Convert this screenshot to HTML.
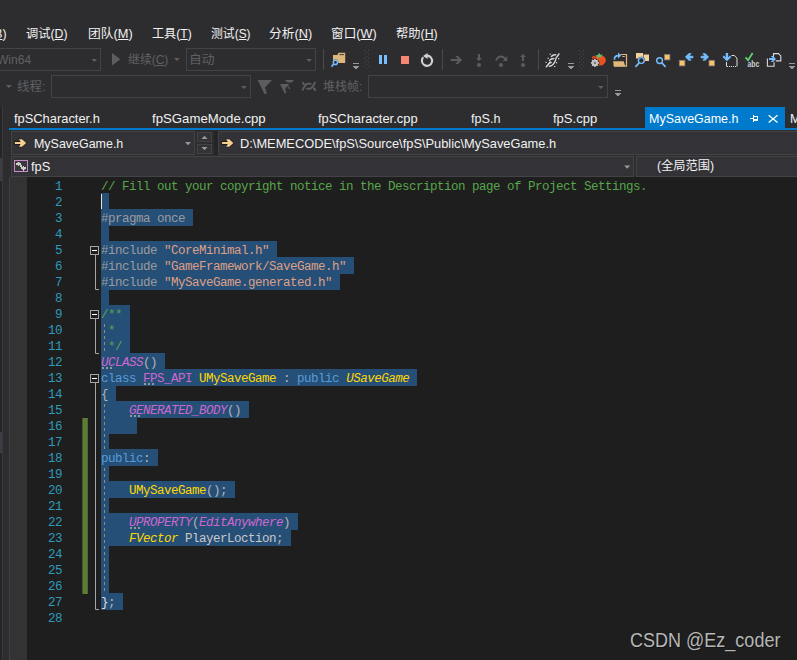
<!DOCTYPE html>
<html lang="zh-CN">
<head>
<meta charset="utf-8">
<title>MySaveGame.h</title>
<style>
*{margin:0;padding:0;box-sizing:border-box}
html,body{width:797px;height:660px;overflow:hidden;background:#2d2d30}
body{position:relative;font-family:"Liberation Sans","Noto Sans CJK SC",sans-serif;font-size:13px;color:#f1f1f1}
.a{position:absolute}
.cb{position:absolute;border:1px solid #434346;background:#333337}
.dz{background:#2d2d30;border-color:#434346}
.tx{position:absolute;white-space:nowrap;line-height:20px;height:20px;transform-origin:0 0}
.tx u{text-decoration:underline;text-underline-offset:1px;text-decoration-thickness:1px}
#ed{position:absolute;left:27px;top:177px;width:770px;height:483px;background:#1e1e1e}
#mg{position:absolute;left:10px;top:177px;width:17px;height:483px;background:#333333}
.sel{position:absolute;left:101px;height:17px;background:#264f78}
.ln{position:absolute;left:27px;width:35px;height:16px;line-height:16px;text-align:right;color:#2e9abb;font-family:"Liberation Mono",monospace;font-size:12.5px;letter-spacing:-0.5012px;white-space:pre}
.cl{position:absolute;left:101px;height:16px;line-height:16px;font-family:"Liberation Mono",monospace;font-size:12.5px;letter-spacing:-0.5012px;white-space:pre}
.cl .i{font-style:italic}
#ov{position:absolute;left:0;top:0;width:797px;height:660px;pointer-events:none}
</style>
</head>
<body>
<!-- left auto-hide strip -->
<div class="a" style="left:0;top:107px;width:2px;height:553px;background:#252526"></div>
<div class="a" style="left:2px;top:107px;width:1px;height:553px;background:#3a3a3e"></div>
<div class="a" style="left:0;top:158px;width:2px;height:23px;background:#3e3e42"></div>
<div class="a" style="left:0;top:432px;width:2px;height:21px;background:#3e3e42"></div>

<!-- toolbar combos -->
<div class="cb dz" style="left:-40px;top:48px;width:141px;height:23px"></div>
<div class="tx" style="left:-3px;top:50px;font-size:12.3px;color:#606063;transform:scaleX(0.98)">Win64</div>
<div class="tx" style="left:-34.500px;top:24px;font-size:12.3px;transform:scaleX(1)">生成(<u>B</u>)</div>
<div class="cb dz" style="left:186px;top:48px;width:130px;height:23px"></div>
<div class="cb dz" style="left:51px;top:75px;width:200px;height:23px"></div>
<div class="cb dz" style="left:368px;top:75px;width:240px;height:23px"></div>

<!-- tabs -->
<div class="a" style="left:645px;top:107px;width:140px;height:22px;background:#007acc"></div>
<div class="a" style="left:9px;top:128px;width:788px;height:2px;background:#007acc"></div>
<div class="tx" style="left:790px;top:109px;font-size:13px;transform:scaleX(0.97)">MySaveGame.cpp</div>

<!-- nav bars -->
<div class="a" style="left:9px;top:130px;width:788px;height:47px;background:#2d2d30"></div>
<div class="cb" style="left:11px;top:131px;width:184px;height:24px"></div>
<div class="cb" style="left:197px;top:132px;width:15px;height:10px"></div>
<div class="cb" style="left:197px;top:144px;width:15px;height:10px"></div>
<div class="a" style="left:214px;top:131px;width:4px;height:24px;background:#252526"></div>
<div class="cb" style="left:218px;top:131px;width:590px;height:24px"></div>
<div class="cb" style="left:11px;top:156px;width:623px;height:21px"></div>
<div class="cb" style="left:636px;top:156px;width:170px;height:21px"></div>

<!-- editor -->
<div class="a" style="left:9px;top:177px;width:1px;height:483px;background:#3f3f46"></div>
<div id="mg"></div>
<div id="ed"></div>

<div class="sel" style="top:193px;width:8px"></div>
<div class="sel" style="top:209px;width:92px"></div>
<div class="sel" style="top:225px;width:8px"></div>
<div class="sel" style="top:241px;width:176px"></div>
<div class="sel" style="top:257px;width:253px"></div>
<div class="sel" style="top:273px;width:239px"></div>
<div class="sel" style="top:289px;width:8px"></div>
<div class="sel" style="top:305px;width:29px"></div>
<div class="sel" style="top:321px;width:29px"></div>
<div class="sel" style="top:337px;width:29px"></div>
<div class="sel" style="top:353px;width:64px"></div>
<div class="sel" style="top:369px;width:316px"></div>
<div class="sel" style="top:385px;width:15px"></div>
<div class="sel" style="top:401px;width:148px"></div>
<div class="sel" style="top:417px;width:36px"></div>
<div class="sel" style="top:433px;width:8px"></div>
<div class="sel" style="top:449px;width:57px"></div>
<div class="sel" style="top:465px;width:8px"></div>
<div class="sel" style="top:481px;width:134px"></div>
<div class="sel" style="top:497px;width:8px"></div>
<div class="sel" style="top:513px;width:197px"></div>
<div class="sel" style="top:529px;width:190px"></div>
<div class="sel" style="top:545px;width:8px"></div>
<div class="sel" style="top:561px;width:8px"></div>
<div class="sel" style="top:577px;width:8px"></div>
<div class="sel" style="top:593px;width:22px"></div>
<div class="ln" style="top:179px">1</div>
<div class="cl" style="top:179px"><span style="color:#57a64a">// Fill out your copyright notice in the Description page of Project Settings.</span></div>
<div class="ln" style="top:195px">2</div>
<div class="ln" style="top:211px">3</div>
<div class="cl" style="top:211px"><span style="color:#9b9b9b">#pragma once</span></div>
<div class="ln" style="top:227px">4</div>
<div class="ln" style="top:243px">5</div>
<div class="cl" style="top:243px"><span style="color:#9b9b9b">#include </span><span style="color:#de9f84">"CoreMinimal.h"</span></div>
<div class="ln" style="top:259px">6</div>
<div class="cl" style="top:259px"><span style="color:#9b9b9b">#include </span><span style="color:#de9f84">"GameFramework/SaveGame.h"</span></div>
<div class="ln" style="top:275px">7</div>
<div class="cl" style="top:275px"><span style="color:#9b9b9b">#include </span><span style="color:#de9f84">"MySaveGame.generated.h"</span></div>
<div class="ln" style="top:291px">8</div>
<div class="ln" style="top:307px">9</div>
<div class="cl" style="top:307px"><span style="color:#57a64a">/**</span></div>
<div class="ln" style="top:323px">10</div>
<div class="cl" style="top:323px"><span style="color:#57a64a"> * </span></div>
<div class="ln" style="top:339px">11</div>
<div class="cl" style="top:339px"><span style="color:#57a64a"> */</span></div>
<div class="ln" style="top:355px">12</div>
<div class="cl" style="top:355px"><span style="color:#cc68cf" class="i">UCLASS</span><span style="color:#b4b4b4">()</span></div>
<div class="ln" style="top:371px">13</div>
<div class="cl" style="top:371px"><span style="color:#569cd6">class</span><span style="color:#c8c8c8"> </span><span style="color:#cc68cf">FPS_API</span><span style="color:#c8c8c8"> </span><span style="color:#ffd700">UMySaveGame</span><span style="color:#b4b4b4"> : </span><span style="color:#569cd6">public</span><span style="color:#c8c8c8"> </span><span style="color:#ffd700" class="i">USaveGame</span></div>
<div class="ln" style="top:387px">14</div>
<div class="cl" style="top:387px"><span style="color:#b4b4b4">{</span></div>
<div class="ln" style="top:403px">15</div>
<div class="cl" style="top:403px"><span style="color:#c8c8c8">    </span><span style="color:#cc68cf" class="i">GENERATED_BODY</span><span style="color:#b4b4b4">()</span></div>
<div class="ln" style="top:419px">16</div>
<div class="ln" style="top:435px">17</div>
<div class="ln" style="top:451px">18</div>
<div class="cl" style="top:451px"><span style="color:#569cd6">public</span><span style="color:#b4b4b4">:</span></div>
<div class="ln" style="top:467px">19</div>
<div class="ln" style="top:483px">20</div>
<div class="cl" style="top:483px"><span style="color:#c8c8c8">    </span><span style="color:#ffd700">UMySaveGame</span><span style="color:#b4b4b4">();</span></div>
<div class="ln" style="top:499px">21</div>
<div class="ln" style="top:515px">22</div>
<div class="cl" style="top:515px"><span style="color:#c8c8c8">    </span><span style="color:#cc68cf" class="i">UPROPERTY</span><span style="color:#b4b4b4">(</span><span style="color:#cc68cf" class="i">EditAnywhere</span><span style="color:#b4b4b4">)</span></div>
<div class="ln" style="top:531px">23</div>
<div class="cl" style="top:531px"><span style="color:#c8c8c8">    </span><span style="color:#ffd700" class="i">FVector</span><span style="color:#c8c8c8"> </span><span style="color:#c8c8c8">PlayerLoction</span><span style="color:#b4b4b4">;</span></div>
<div class="ln" style="top:547px">24</div>
<div class="ln" style="top:563px">25</div>
<div class="ln" style="top:579px">26</div>
<div class="ln" style="top:595px">27</div>
<div class="cl" style="top:595px"><span style="color:#dcdcdc">}</span><span style="color:#b4b4b4">;</span></div>
<div class="ln" style="top:611px">28</div>
<div class="a" style="left:101px;top:194px;width:1px;height:15px;background:#e4e4e4"></div>

<div class="tx" style="left:26.4px;top:24px;font-size:12.3px;color:#f1f1f1;transform:scaleX(0.9959)">调试(<u>D</u>)</div>
<div class="tx" style="left:87.6px;top:24px;font-size:12.3px;color:#f1f1f1;transform:scaleX(1.0395)">团队(<u>M</u>)</div>
<div class="tx" style="left:151.5px;top:24px;font-size:12.3px;color:#f1f1f1;transform:scaleX(0.9855)">工具(<u>T</u>)</div>
<div class="tx" style="left:210.6px;top:24px;font-size:12.3px;color:#f1f1f1;transform:scaleX(0.9633)">测试(<u>S</u>)</div>
<div class="tx" style="left:268.9px;top:24px;font-size:12.3px;color:#f1f1f1;transform:scaleX(1.0351)">分析(<u>N</u>)</div>
<div class="tx" style="left:331.0px;top:24px;font-size:12.3px;color:#f1f1f1;transform:scaleX(1.0283)">窗口(<u>W</u>)</div>
<div class="tx" style="left:395.5px;top:24px;font-size:12.3px;color:#f1f1f1;transform:scaleX(0.9993)">帮助(<u>H</u>)</div>
<div class="tx" style="left:127.8px;top:50px;font-size:12.3px;color:#606063;transform:scaleX(0.9671)">继续(<u>C</u>)</div>
<div class="tx" style="left:188.8px;top:50px;font-size:12.3px;color:#606063;transform:scaleX(1.0409)">自动</div>
<div class="tx" style="left:17.2px;top:77px;font-size:12.3px;color:#606063;transform:scaleX(1.0116)">线程:</div>
<div class="tx" style="left:322.8px;top:77px;font-size:12.3px;color:#606063;transform:scaleX(0.9752)">堆栈帧:</div>
<div class="tx" style="left:13.7px;top:109px;font-size:13px;color:#f1f1f1;transform:scaleX(0.9901)">fpSCharacter.h</div>
<div class="tx" style="left:151.8px;top:109px;font-size:13px;color:#f1f1f1;transform:scaleX(1.015)">fpSGameMode.cpp</div>
<div class="tx" style="left:318.1px;top:109px;font-size:13px;color:#f1f1f1;transform:scaleX(0.991)">fpSCharacter.cpp</div>
<div class="tx" style="left:471.1px;top:109px;font-size:13px;color:#f1f1f1;transform:scaleX(0.9701)">fpS.h</div>
<div class="tx" style="left:552.8px;top:109px;font-size:13px;color:#f1f1f1;transform:scaleX(1.0017)">fpS.cpp</div>
<div class="tx" style="left:648.8px;top:109px;font-size:13px;color:#ffffff;transform:scaleX(0.9599)">MySaveGame.h</div>
<div class="tx" style="left:33.8px;top:134px;font-size:13px;color:#f1f1f1;transform:scaleX(0.9577)">MySaveGame.h</div>
<div class="tx" style="left:240.4px;top:134px;font-size:13px;color:#f1f1f1;transform:scaleX(0.9877)">D:\MEMECODE\fpS\Source\fpS\Public\MySaveGame.h</div>
<div class="tx" style="left:31.1px;top:157px;font-size:13px;color:#f1f1f1;transform:scaleX(0.984)">fpS</div>
<div class="tx" style="left:656.7px;top:156px;font-size:12.3px;color:#f1f1f1;transform:scaleX(0.9948)">(全局范围)</div>
<div class="tx" style="left:630.1px;top:630px;font-size:20.3px;color:#b6b6b6;transform:scaleX(0.8881);text-shadow:1px 1px 0 rgba(0,0,0,.35)">CSDN @Ez_coder</div>
<svg id="ov" width="797" height="660" viewBox="0 0 797 660">
<!-- dropdown triangles (disabled) -->
<g fill="#5e5e61">
<path d="M91.5 59h5.6l-2.8 3z"/>
<path d="M174 58h5.8l-2.9 3z"/>
<path d="M306.3 59h5.6l-2.8 3z"/>
<path d="M6 85h5.8l-2.9 3z"/>
<path d="M241 86h5.8l-2.9 3z"/>
<path d="M598 86h5.8l-2.9 3z"/>
<!-- play -->
<path d="M112 53l8.3 6.2-8.3 6.2z"/>
</g>
<!-- separators -->
<g fill="#4a4a4d">
<rect x="323" y="49" width="1" height="21"/>
<rect x="442" y="49" width="1" height="21"/>
<rect x="538" y="49" width="1" height="21"/>
</g>
<!-- grips -->
<g fill="#47474b">
<g><rect x="364" y="50" width="1" height="1"/><rect x="368" y="50" width="1" height="1"/><rect x="366" y="52" width="1" height="1"/>
<rect x="364" y="54" width="1" height="1"/><rect x="368" y="54" width="1" height="1"/><rect x="366" y="56" width="1" height="1"/>
<rect x="364" y="58" width="1" height="1"/><rect x="368" y="58" width="1" height="1"/><rect x="366" y="60" width="1" height="1"/>
<rect x="364" y="62" width="1" height="1"/><rect x="368" y="62" width="1" height="1"/><rect x="366" y="64" width="1" height="1"/>
<rect x="364" y="66" width="1" height="1"/><rect x="368" y="66" width="1" height="1"/><rect x="366" y="68" width="1" height="1"/></g>
<g transform="translate(215 0)"><rect x="364" y="50" width="1" height="1"/><rect x="368" y="50" width="1" height="1"/><rect x="366" y="52" width="1" height="1"/>
<rect x="364" y="54" width="1" height="1"/><rect x="368" y="54" width="1" height="1"/><rect x="366" y="56" width="1" height="1"/>
<rect x="364" y="58" width="1" height="1"/><rect x="368" y="58" width="1" height="1"/><rect x="366" y="60" width="1" height="1"/>
<rect x="364" y="62" width="1" height="1"/><rect x="368" y="62" width="1" height="1"/><rect x="366" y="64" width="1" height="1"/>
<rect x="364" y="66" width="1" height="1"/><rect x="368" y="66" width="1" height="1"/><rect x="366" y="68" width="1" height="1"/></g>
</g>
<!-- overflow glyphs -->
<g fill="#999999" shape-rendering="crispEdges">
<path d="M353 63h6v1h-6zM353 66h6v1h-6zM354 67h4v1h-4zM355 68h2v1h-2z"/>
<path d="M568 63h6v1h-6zM568 66h6v1h-6zM569 67h4v1h-4zM570 68h2v1h-2z"/>
<path d="M789 63h6v1h-6zM789 66h6v1h-6zM790 67h4v1h-4zM791 68h2v1h-2z"/>
<path d="M615 90h6v1h-6zM615 93h6v1h-6zM616 94h4v1h-4zM617 95h2v1h-2z"/>
</g>
<!-- folder + magnifier -->
<path d="M333 55h4.3l1.2-2.2h6.7v10.1H333z" fill="#dcb67a"/>
<rect x="339.5" y="54.2" width="4.6" height="0.9" fill="#2d2d30"/>
<circle cx="335.4" cy="62.4" r="2.9" fill="#2d2d30"/>
<circle cx="335.4" cy="62.4" r="2.1" fill="#2d2d30" stroke="#75beff" stroke-width="1.4"/>
<path d="M333.8 64l-2.4 2.6" stroke="#75beff" stroke-width="1.6" fill="none"/>
<!-- pause / stop / restart -->
<rect x="379" y="55" width="3" height="9" fill="#75beff"/>
<rect x="384" y="55" width="3" height="9" fill="#75beff"/>
<rect x="401" y="56" width="8" height="8" fill="#f48771"/>
<path d="M423.2 57.3A5.1 5.1 0 1 0 427 55.6" fill="none" stroke="#d0d0d0" stroke-width="2.1"/>
<path d="M427.6 53l-4.6 3 4.6 3z" fill="#d0d0d0"/>
<!-- step arrows (disabled) -->
<g fill="#5c5c5f" stroke="none">
<path d="M450.7 59h7.3l-2.6-3h2.6l4 4-4 4h-2.6l2.6-3h-7.3z"/>
<path d="M478 54h2v4h2l-3 3-3-3h2z"/><circle cx="479" cy="65" r="2"/>
<path d="M495.2 60.8c0.8-3.4 3-5.4 5.8-5.4 2 0 3.6 1 4.7 2.5l1.6-1.6v4.6h-4.6l1.6-1.6c-0.8-1.1-1.9-1.9-3.3-1.9-1.900 0-3.300 1.300-3.900 3.400z"/><circle cx="501" cy="65" r="2"/>
<path d="M522 61v-4h-2l3-3 3 3h-2v4z"/><circle cx="523" cy="65" r="2"/>
</g>
<!-- hash-like icon -->
<g stroke="#d4d4d4" stroke-width="1.500" fill="none" stroke-linecap="round">
<path d="M546.300 66.700l4-4.600M557.200 56.600l1.700-2.600"/>
<path d="M551.400 56.500q1.300-2 4.300-1.800M549.500 60.400q1.400-1.900 4.300-1.900M549.200 63.300q0.800-0.800 2-0.800" stroke-width="1.400"/>
<path d="M556.300 57.300c-0.800 3.600-2.200 8.600-7 9" stroke-width="1.400"/>
</g>
<g fill="#d4d4d4"><rect x="549.600" y="53.600" width="1.200" height="1.200"/><rect x="547.500" y="57.700" width="1.200" height="1.200"/><rect x="545.500" y="61.800" width="1.200" height="1.200"/><rect x="558.100" y="58" width="1.200" height="1.200"/><rect x="556" y="62.100" width="1.200" height="1.200"/><rect x="554.100" y="65.900" width="1.200" height="1.200"/></g>
<!-- tomato -->
<ellipse cx="600" cy="60.200" rx="5.800" ry="5.300" fill="#e9511f"/>
<circle cx="594" cy="57.800" r="2" fill="#d8451a"/>
<path d="M595 55.800l2.800-0.800 1.400-2.300 1 2 2.800-0.300-2 1.800 0.600 1.600-2.600-0.700-2 1.300 0.200-1.900z" fill="#5cc06a"/>
<circle cx="594.900" cy="62.900" r="4.500" fill="#2d2d30"/>
<circle cx="594.900" cy="62.900" r="2.500" fill="#c4c4c4" stroke="#c4c4c4" stroke-width="1.200"/>
<g stroke="#c4c4c4" stroke-width="1.600"><path d="M594.900 58.900v8M590.900 62.900h8M592.100 60.100l5.600 5.600M592.100 65.700l5.600-5.600"/></g>
<circle cx="594.900" cy="62.900" r="1.100" fill="#6a6a6a"/>
<!-- folder with blue arrow -->
<path d="M620.500 54.500h6v11.700h-12.600" fill="none" stroke="#dcb67a" stroke-width="1.200"/>
<rect x="622.300" y="56" width="2.500" height="1" fill="#dcb67a"/>
<path d="M613.200 61.300h10.500l1.500 5h-11.500z" fill="#dcb67a"/>
<path d="M614.600 59.600c-0.600-2.600 1-4 4-4" fill="none" stroke="#75beff" stroke-width="1.700"/>
<path d="M618 52.600l3.200 3-3.200 3z" fill="#75beff"/>
<!-- find in files -->
<rect x="636" y="53" width="7" height="5.500" fill="#f0d29a"/>
<rect x="643.500" y="54.500" width="5.500" height="6.500" fill="#f0d29a"/>
<circle cx="641.300" cy="60.500" r="3.800" fill="#2d2d30"/>
<circle cx="641.300" cy="60.500" r="2.900" fill="#2d2d30" stroke="#75beff" stroke-width="1.400"/>
<path d="M639.200 62.800l-3.800 4" stroke="#75beff" stroke-width="1.700" fill="none"/>
<!-- find next -->
<circle cx="659.600" cy="60.600" r="2.900" fill="none" stroke="#75beff" stroke-width="1.400"/>
<path d="M661.800 62.800l3.800 4" stroke="#75beff" stroke-width="1.700" fill="none"/>
<rect x="664.500" y="54.500" width="5.400" height="5.400" fill="#fcc26a" stroke="#7a7a7a" stroke-width="0.800"/>
<!-- nav back / forward -->
<rect x="679.300" y="60.300" width="5.600" height="5.600" fill="#fcc26a" stroke="#7a7a7a" stroke-width="0.800"/>
<path d="M693 56.200v1.800h-3.800l2 2.300h-2.500l-3.400-3.300 3.400-3.400h2.500l-2 2.400 3.800 0.200z" fill="#75beff" stroke="#75beff" stroke-width="0.600"/>
<path d="M701 56.200v1.800h3.800l-2 2.300h2.500l3.400-3.300-3.400-3.400h-2.500l2 2.400-3.800 0.200z" fill="#75beff" stroke="#75beff" stroke-width="0.600"/>
<rect x="709" y="60.300" width="5.600" height="5.600" fill="#fcc26a" stroke="#7a7a7a" stroke-width="0.800"/>
<!-- down arrow + page -->
<rect x="725.700" y="53" width="2.400" height="6" fill="#75beff"/>
<path d="M723.200 56.200l3.700 3.700 3.700-3.700" fill="none" stroke="#75beff" stroke-width="2"/>
<path d="M731.500 55.500h2.800l2.700 2.700v8.300" fill="none" stroke="#e0e0e0" stroke-width="1"/>
<path d="M726.500 62v4.500" fill="none" stroke="#e0e0e0" stroke-width="1"/>
<path d="M727 66.500h10" fill="none" stroke="#e0e0e0" stroke-width="1" stroke-dasharray="1 1"/>
<!-- check abc -->
<path d="M745.500 57.300l2.600 3 4.500-7.200" fill="none" stroke="#5fd068" stroke-width="1.800"/>
<text x="747.400" y="66.700" font-family="Liberation Sans, sans-serif" font-size="8.500" font-weight="bold" fill="#d0d0d0" textLength="11.800" lengthAdjust="spacingAndGlyphs">abc</text>
<!-- copy docs -->
<path d="M773.500 58v-4.400h5l2.300 2.300v5h-5" fill="none" stroke="#d8d8d8" stroke-width="1.100"/>
<path d="M767.400 58.600v7.600h6.700v-4" fill="none" stroke="#d8d8d8" stroke-width="1.100"/>
<path d="M769 58h3.600l-1.800-2h2.200l3 3-3 3h-2.200l1.800-2h-3.600z" fill="#75beff"/>
<!-- row2 filter icons (disabled) -->
<g fill="#5c5c5f">
<path d="M257.700 80h14.300l-7 7.600 2 6.200h-2.700z"/>
<path d="M285 80h9l-2.200 2.600h-4.400zM280 84h9.500l-4.500 5 1.600 4.200h-2z"/>
<path d="M288.500 86l2 3.200h-1.200l-1.600-2.400z"/>
</g>
<g fill="none" stroke="#5c5c5f" stroke-width="2" stroke-linecap="round">
<path d="M302.700 89.600c1.500-2 2.500-5.900 5.200-5.900h2.600"/>
<path d="M315 82.700c-1.500 2-2.500 6-5.200 6h-2.600"/>
<path d="M303 82.900l1 1.400M314 88.400l1.300 1.800"/>
</g>
<!-- active tab pin + close -->
<g fill="#ffffff" shape-rendering="crispEdges">
<rect x="750" y="118" width="4" height="1"/><rect x="753" y="115" width="1" height="7"/>
<rect x="754" y="116" width="4" height="1"/><rect x="757" y="116" width="1" height="5"/><rect x="754" y="119" width="4" height="2"/>
</g>
<path d="M768.700 115.300l8.800 7.300M777.500 115.300l-8.800 7.300" fill="none" stroke="#ffffff" stroke-width="1.300"/>
<!-- nav dropdown arrows -->
<g fill="#999999">
<path d="M185 142h6l-3 3.300z"/>
<path d="M624.200 165.500h6l-3 3.300z"/>
<path d="M201.500 139h6l-3-3.300z"/>
<path d="M201.500 147h6l-3 3.300z"/>
</g>
<!-- nav arrow icons -->
<g>
<path d="M14.900 141.900h5.700l-1.700-2.600h3.200l4.100 3.700-4.100 3.800h-3.200l1.700-2.700h-5.700z" fill="#f5cf8e" stroke="#151515" stroke-width="1.100" stroke-linejoin="round" paint-order="stroke"/>
</g>
<g transform="translate(207.200 0)">
<path d="M14.900 141.900h5.700l-1.700-2.600h3.200l4.100 3.700-4.100 3.800h-3.200l1.700-2.700h-5.700z" fill="#f5cf8e" stroke="#151515" stroke-width="1.100" stroke-linejoin="round" paint-order="stroke"/>
</g>
<!-- fpS project icon -->
<rect x="14.500" y="160.500" width="13" height="11" fill="#38383b" stroke="#c88ac8" stroke-width="1"/>
<g fill="#cfcfcf" shape-rendering="crispEdges">
<rect x="18" y="162" width="1" height="4"/><rect x="16" y="163" width="5" height="2"/><rect x="17" y="162" width="3" height="1" opacity="0.500"/>
<rect x="20" y="165" width="2" height="2"/>
<rect x="23" y="166" width="1" height="5"/><rect x="21" y="167" width="5" height="2"/><rect x="22" y="169" width="3" height="1" opacity="0.600"/>
</g>
<!-- outlining -->
<g fill="none" stroke="#a5a5a5" stroke-width="1">
<path d="M95.500 255v34.500h3.5"/>
<path d="M95.500 319v34.500h3.5"/>
<path d="M95.500 383v226.500h3.5"/>
</g>
<g>
<rect x="90.500" y="246.500" width="8" height="8" fill="#1e1e1e" stroke="#a5a5a5" stroke-width="1"/>
<rect x="92" y="250" width="5" height="1" fill="#ffffff"/>
</g>
<g transform="translate(0 64)">
<rect x="90.500" y="246.500" width="8" height="8" fill="#1e1e1e" stroke="#a5a5a5" stroke-width="1"/>
<rect x="92" y="250" width="5" height="1" fill="#ffffff"/>
</g>
<g transform="translate(0 128)">
<rect x="90.500" y="246.500" width="8" height="8" fill="#1e1e1e" stroke="#a5a5a5" stroke-width="1"/>
<rect x="92" y="250" width="5" height="1" fill="#ffffff"/>
</g>
<!-- indent guides -->
<g fill="none" stroke="#958b82" stroke-width="1" stroke-dasharray="3 3">
<path d="M104.500 324v29"/>
<path d="M104.500 404v46"/>
<path d="M104.500 468v126"/>
</g>
<!-- change bar -->
<rect x="82.400" y="418" width="5.400" height="176" fill="#5c7d33"/>
<!-- suggestion dots -->
<g fill="#919b9e" shape-rendering="crispEdges">
<rect x="102" y="367" width="2" height="2"/><rect x="106" y="367" width="2" height="2"/><rect x="110" y="367" width="2" height="2"/>
<rect x="144" y="383" width="2" height="2"/><rect x="148" y="383" width="2" height="2"/><rect x="152" y="383" width="2" height="2"/>
<rect x="130" y="415" width="2" height="2"/><rect x="134" y="415" width="2" height="2"/><rect x="138" y="415" width="2" height="2"/>
<rect x="130" y="527" width="2" height="2"/><rect x="134" y="527" width="2" height="2"/><rect x="138" y="527" width="2" height="2"/>
</g>
</svg>

</body>
</html>
